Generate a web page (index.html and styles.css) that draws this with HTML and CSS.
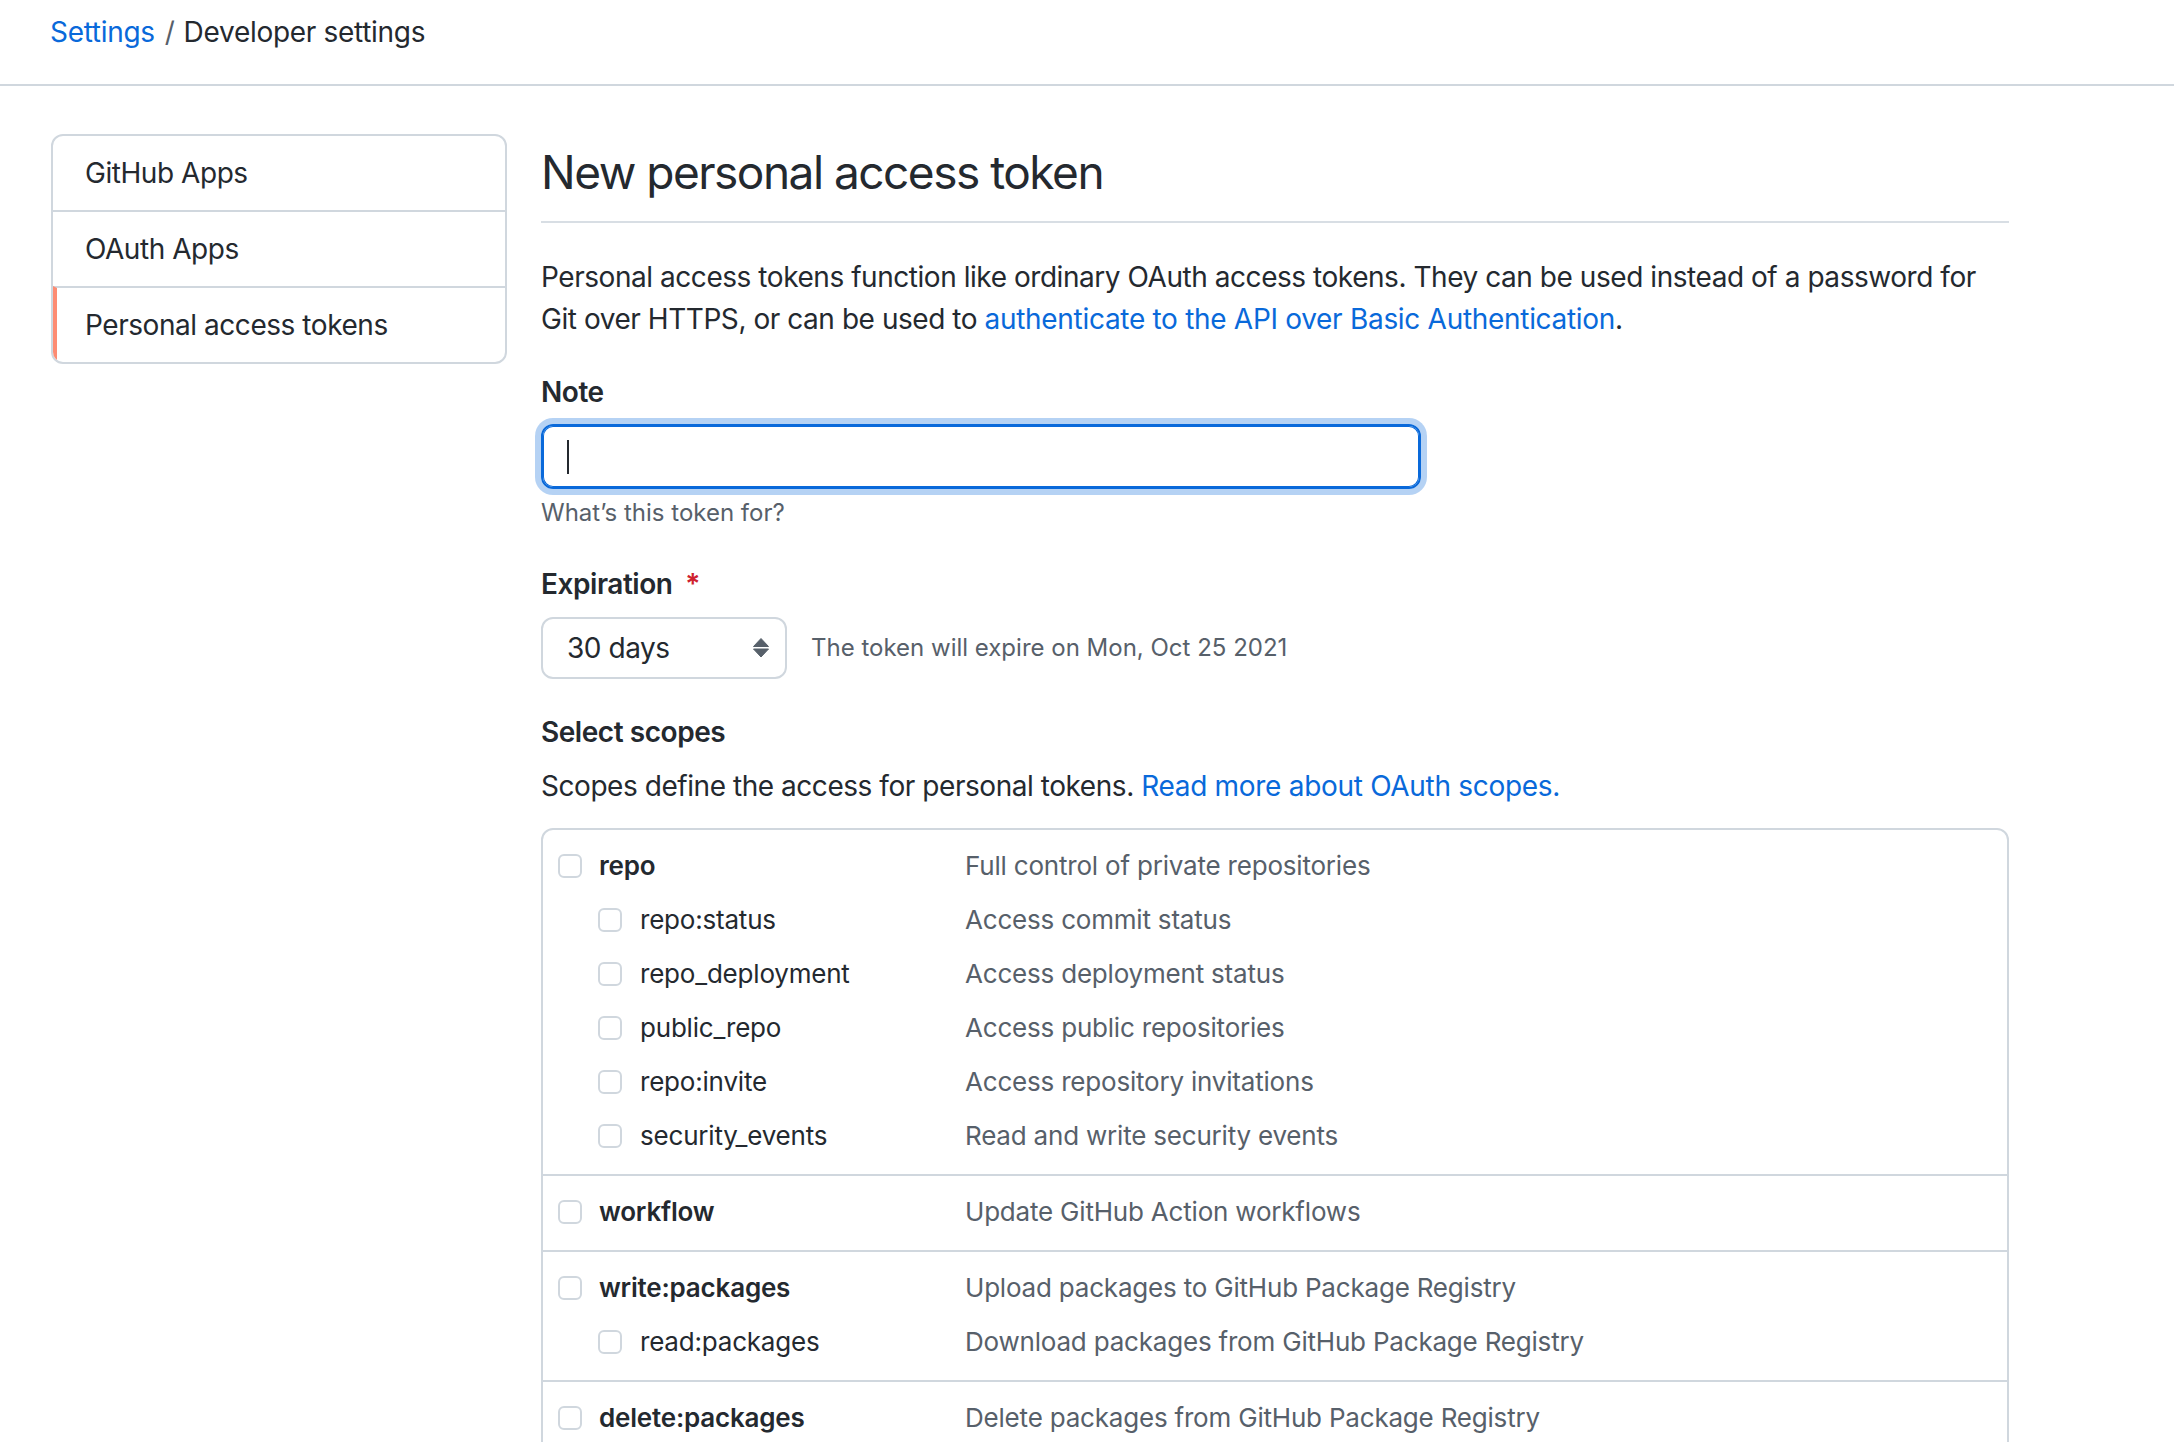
FILE: index.html
```html
<!DOCTYPE html>
<html lang="en">
<head>
<meta charset="utf-8">
<title>New personal access token</title>
<link rel="stylesheet" href="styles.css">
</head>
<body>
<header class="page-header">
  <nav class="breadcrumb">
    <a class="crumb-link" href="#">Settings</a><span class="crumb-sep">/</span><span class="crumb-current">Developer settings</span>
  </nav>
</header>

<div class="layout">
  <nav class="sidebar">
    <a class="side-item" href="#">GitHub Apps</a>
    <a class="side-item" href="#">OAuth Apps</a>
    <a class="side-item active" href="#">Personal access tokens</a>
  </nav>

  <main class="content">
    <h1 class="title">New personal access token</h1>
    <p class="lead">Personal access tokens function like ordinary OAuth access tokens. They can be used instead of a password for Git over HTTPS, or can be used to <a class="link" href="#">authenticate to the API over Basic Authentication</a>.</p>

    <div class="field-label">Note</div>
    <div class="text-input"><span class="caret"></span></div>
    <div class="hint">What’s this token for?</div>

    <div class="field-label expiration-label">Expiration <span class="required">*</span></div>
    <div class="expire-row">
      <div class="select">
        <span>30 days</span>
        <svg class="select-arrows" width="16" height="20" viewBox="0 0 16 20" aria-hidden="true">
          <path d="M8 0.5 L15.5 8.5 L0.5 8.5 Z" fill="#57606a" stroke="#57606a" stroke-linejoin="round" stroke-width="1"/>
          <path d="M0.5 11 L15.5 11 L8 19 Z" fill="#57606a" stroke="#57606a" stroke-linejoin="round" stroke-width="1"/>
        </svg>
      </div>
      <span class="expire-note">The token will expire on Mon, Oct 25 2021</span>
    </div>

    <div class="field-label scopes-label">Select scopes</div>
    <p class="scopes-desc">Scopes define the access for personal tokens. <a class="link" href="#">Read more about OAuth scopes.</a></p>

    <div class="scopes">
      <div class="scope-group">
        <div class="scope-row top"><label class="scope-name"><span class="checkbox"></span>repo</label><span class="scope-desc">Full control of private repositories</span></div>
        <div class="scope-row sub"><label class="scope-name"><span class="checkbox"></span>repo:status</label><span class="scope-desc">Access commit status</span></div>
        <div class="scope-row sub"><label class="scope-name"><span class="checkbox"></span>repo_deployment</label><span class="scope-desc">Access deployment status</span></div>
        <div class="scope-row sub"><label class="scope-name"><span class="checkbox"></span>public_repo</label><span class="scope-desc">Access public repositories</span></div>
        <div class="scope-row sub"><label class="scope-name"><span class="checkbox"></span>repo:invite</label><span class="scope-desc">Access repository invitations</span></div>
        <div class="scope-row sub"><label class="scope-name"><span class="checkbox"></span>security_events</label><span class="scope-desc">Read and write security events</span></div>
      </div>
      <div class="scope-group">
        <div class="scope-row top"><label class="scope-name"><span class="checkbox"></span>workflow</label><span class="scope-desc">Update GitHub Action workflows</span></div>
      </div>
      <div class="scope-group">
        <div class="scope-row top"><label class="scope-name"><span class="checkbox"></span>write:packages</label><span class="scope-desc">Upload packages to GitHub Package Registry</span></div>
        <div class="scope-row sub"><label class="scope-name"><span class="checkbox"></span>read:packages</label><span class="scope-desc">Download packages from GitHub Package Registry</span></div>
      </div>
      <div class="scope-group">
        <div class="scope-row top"><label class="scope-name"><span class="checkbox"></span>delete:packages</label><span class="scope-desc">Delete packages from GitHub Package Registry</span></div>
      </div>
    </div>
  </main>
</div>
</body>
</html>
```

FILE: styles.css
```css
html, body {
  margin: 0;
  padding: 0;
  background: #ffffff;
}

body {
  font-family: Inter, "Noto Sans", "Liberation Sans", sans-serif;
  font-size: 28px;
  line-height: 42px;
  letter-spacing: -0.45px;
  color: #24292f;
}

a {
  text-decoration: none;
}

.page-header {
  box-sizing: border-box;
  height: 86px;
  padding: 11px 50px 0;
  border-bottom: 2px solid #d0d7de;
}

.breadcrumb {
  display: flex;
  align-items: baseline;
  letter-spacing: -0.3px;
}

.crumb-link {
  color: #0969da;
}

.crumb-sep {
  color: #57606a;
  margin: 0 9px 0 10px;
}

.crumb-current {
  color: #24292f;
}

.layout {
  display: flex;
  align-items: flex-start;
  gap: 34px;
  padding: 48px 0 0 51px;
}

.sidebar {
  box-sizing: border-box;
  width: 456px;
  flex: none;
  border: 2px solid #d0d7de;
  border-radius: 12px;
  overflow: hidden;
  display: flex;
  flex-direction: column;
}

.side-item {
  display: block;
  padding: 16px 32px;
  color: #24292f;
}

.side-item + .side-item {
  border-top: 2px solid #d0d7de;
}

.side-item.active {
  border-left: 4px solid #fd8c73;
  padding-left: 28px;
}

.content {
  width: 1468px;
  flex: none;
  padding-bottom: 60px;
}

.title {
  margin: 8px 0 0;
  font-size: 46px;
  line-height: 60px;
  font-weight: 400;
  letter-spacing: -1.5px;
  padding-bottom: 19px;
  border-bottom: 2px solid #d8dee4;
}

.lead {
  margin: 33px 0 0;
}

.link {
  color: #0969da;
  letter-spacing: -0.3px;
}

.field-label {
  font-weight: 600;
  margin-top: 31px;
}

.text-input {
  box-sizing: border-box;
  margin-top: 11px;
  width: 880px;
  height: 65px;
  border: 2px solid #0969da;
  border-radius: 12px;
  box-shadow: inset 0 0 0 1px #0969da, 0 0 0 6px rgba(9, 105, 218, 0.3);
  padding-left: 24px;
  display: flex;
  align-items: center;
}

.caret {
  display: block;
  width: 2px;
  height: 34px;
  background: #24292f;
}

.hint {
  margin-top: 6px;
  font-size: 24px;
  line-height: 36px;
  letter-spacing: 0;
  color: #57606a;
}

.expiration-label {
  margin-top: 32px;
}

.required {
  color: #cf222e;
  margin-left: 6px;
}

.expire-row {
  margin-top: 12px;
  display: flex;
  align-items: center;
  gap: 24px;
}

.select {
  box-sizing: border-box;
  width: 246px;
  height: 62px;
  border: 2px solid #d0d7de;
  border-radius: 12px;
  padding: 0 16px 0 24px;
  display: flex;
  align-items: center;
  justify-content: space-between;
  color: #24292f;
}

.select-arrows {
  display: block;
}

.expire-note {
  font-size: 24px;
  letter-spacing: 0;
  color: #57606a;
}

.scopes-label {
  margin-top: 32px;
}

.scopes-desc {
  margin: 12px 0 0;
}

.scopes {
  margin-top: 21px;
  border: 2px solid #d0d7de;
  border-radius: 12px;
  font-size: 26px;
  letter-spacing: -0.2px;
}

.scope-group {
  padding: 9px 0 11px;
}

.scope-group + .scope-group {
  border-top: 2px solid #d0d7de;
}

.scope-row {
  display: flex;
  align-items: center;
  height: 54px;
  padding-left: 15px;
}

.scope-name {
  box-sizing: border-box;
  width: 407px;
  flex: none;
  display: flex;
  align-items: center;
  color: #24292f;
}

.scope-row.top .scope-name {
  font-weight: 600;
}

.scope-row.sub .scope-name {
  padding-left: 40px;
}

.checkbox {
  box-sizing: border-box;
  width: 24px;
  height: 24px;
  flex: none;
  border: 2px solid #d0d7de;
  border-radius: 6px;
  background: #ffffff;
  margin-right: 17px;
}

.scope-row.sub .checkbox {
  margin-right: 18px;
}

.scope-desc {
  color: #57606a;
}
```
